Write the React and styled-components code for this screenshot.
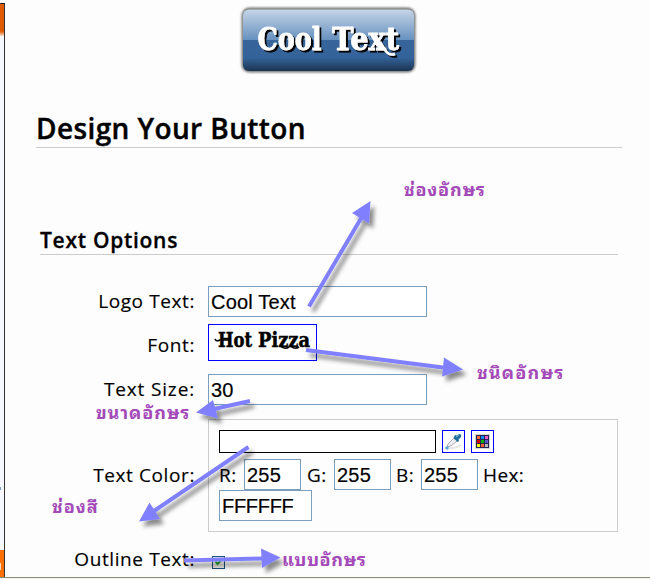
import React from 'react'
import styled, { createGlobalStyle } from 'styled-components'

const GlobalStyle = createGlobalStyle`
    * {
        box-sizing: border-box;
    }
    body {
        margin: 0;
        background: #fdfdfd;
        color: #000;
        font-family: 'Open Sans', 'Noto Sans', sans-serif;
        overflow: hidden;
    }
`;

const Page = styled.div`
    position: relative;
    display: flex;
    width: 650px;
    height: 579px;
    padding-top: 3px;
    overflow: hidden;
`;

const Rail = styled.div`
    width: 5px;
    height: 574px;
    flex: none;
    display: flex;
    flex-direction: column;
    border-top: 1px solid #222;
    border-right: 1px solid #333;
    background: #f8f8ff;
`;

const RailBlock = styled.span`
    width: ${props => props.width || 4}px;
    height: ${props => props.height}px;
    margin-top: ${props => props.top || 0}px;
    flex: none;
    background: ${props => props.color};
`;

const Main = styled.main`
    flex: 1;
    height: 574px;
    padding: 0 28px 0 31px;
`;

const LogoRow = styled.div`
    height: 74px;
    padding-left: 202px;
`;

const Title = styled.h1`
    height: 71px;
    margin: 0;
    padding-top: 32px;
    border-bottom: 1px solid #ccc;
    font-size: 28px;
    line-height: 38px;
    font-weight: 600;
    letter-spacing: 0.4px;
    -webkit-text-stroke: 0.4px #000;
    white-space: nowrap;
`;

const Section = styled.section`
    padding: 75px 4px 0;
`;

const SectionTitle = styled.h2`
    height: 32px;
    margin: 0 0 31px;
    border-bottom: 1px solid #ccc;
    font-size: 21px;
    line-height: 34px;
    font-weight: 600;
    letter-spacing: 0.72px;
    -webkit-text-stroke: 0.3px #000;
    white-space: nowrap;
`;

const Row = styled.div`
    display: flex;
    align-items: center;
    height: ${props => props.height}px;
    margin-bottom: ${props => props.gap || 0}px;
`;

const Label = styled.label`
    width: 155px;
    margin-right: 13px;
    padding-bottom: ${props => (props.low ? 0 : 2)}px;
    padding-top: ${props => (props.low ? 4 : 0)}px;
    flex: none;
    text-align: right;
    font-size: 19px;
    line-height: 28px;
    letter-spacing: ${props => props.spacing || 0.6}px;
    -webkit-text-stroke: 0.15px #000;
    white-space: nowrap;
`;

const Field = styled.input`
    width: ${props => props.width}px;
    height: 31px;
    margin: 0;
    padding: 1px 2px 0;
    border: 1px solid #7b9ebd;
    border-radius: 0;
    outline: 0;
    background: #fff;
    color: #000;
    font: 20px 'Liberation Sans', Arial, sans-serif;
    letter-spacing: ${props => props.spacing || 0.2}px;
    -webkit-text-stroke: 0.2px #000;
`;

const FontBox = styled.div`
    width: 109px;
    height: 37px;
    border: 1px solid #00f;
    background: #fff;
`;

const ColorPanel = styled.div`
    width: 410px;
    height: 113px;
    padding: 10px;
    border: 1px solid #ccc;
`;

const SwatchLine = styled.div`
    display: flex;
    gap: 6px;
    margin-bottom: 6px;
`;

const Swatch = styled.span`
    width: 217px;
    height: 23px;
    border: 1px solid #000;
    background: #fff;
`;

const IconButton = styled.span`
    width: 23px;
    height: 23px;
    border: 1px solid #00f;
    background: #fff;
    svg {
        display: block;
    }
`;

const Channels = styled.div`
    display: flex;
    align-items: center;
    height: 31px;
`;

const Channel = styled.span`
    width: ${props => props.width}px;
    padding-left: ${props => props.indent}px;
    flex: none;
    font-size: 19px;
    line-height: 28px;
    letter-spacing: 0.4px;
    -webkit-text-stroke: 0.15px #000;
    white-space: nowrap;
`;

const Check = styled.span`
    width: 13px;
    height: 13px;
    margin: 5px 0 0 4px;
    border: 1px solid #1c5180;
    background: #f4f4f0;
    svg {
        display: block;
    }
`;

const BottomLine = styled.div`
    position: absolute;
    left: 0;
    right: 0;
    bottom: 0;
    height: 2px;
    border-top: 1px solid #8c8c7a;
    background: #f4f3ea;
`;

const Arrows = styled.svg`
    position: absolute;
    left: 0;
    top: 0;
    pointer-events: none;
`;

const Note = styled.span`
    position: absolute;
    left: ${props => props.x}px;
    top: ${props => props.y}px;
    color: #a349b8;
    font: bold 18px/20px 'Noto Sans Thai Looped', 'Noto Looped Thai', 'Loma', 'Waree', 'Garuda', 'Noto Sans Thai', sans-serif;
    letter-spacing: ${props => props.spacing || 0}px;
    white-space: nowrap;
`;

const LogoButton = () => (
    <svg width="180" height="74" viewBox="238 3 180 74">
        <defs>
            <linearGradient id="face" x1="0" y1="0" x2="0" y2="1">
                <stop offset="0" stopColor="#c5d5e7" />
                <stop offset="0.5" stopColor="#6690bf" />
                <stop offset="0.5" stopColor="#376599" />
                <stop offset="0.78" stopColor="#34639b" />
                <stop offset="1" stopColor="#1b3350" />
            </linearGradient>
            <filter id="glow" x="-10%" y="-20%" width="120%" height="140%">
                <feGaussianBlur stdDeviation="1.3" />
            </filter>
            <filter id="drop" filterUnits="userSpaceOnUse" x="238" y="3" width="180" height="74">
                <feDropShadow dx="2" dy="2" stdDeviation="0.3" floodColor="#000" floodOpacity="1" />
            </filter>
        </defs>
        <rect x="241.5" y="7.5" width="174" height="65" rx="8" fill="#777" filter="url(#glow)" />
        <rect x="243" y="9.5" width="171" height="61.5" rx="6" fill="url(#face)" />
        <g
            fontFamily="'DejaVu Serif', serif"
            fontWeight="bold"
            fontSize="32"
            fill="#fff"
            stroke="#fff"
            strokeWidth="0.8"
            filter="url(#drop)"
        >
            <text x="257.5" y="50" textLength="64" lengthAdjust="spacingAndGlyphs">Cool</text>
            <text x="332" y="50" textLength="67" lengthAdjust="spacingAndGlyphs">Text</text>
            <path d="M380 42L385 50Q389 56 395 54" fill="none" strokeWidth="2.4" />
        </g>
    </svg>
)

const HotPizza = () => (
    <svg width="107" height="35" viewBox="209 325 107 35">
        <g fontFamily="'DejaVu Serif', serif" fontWeight="bold" fontSize="20" stroke="#000" strokeWidth="0.5">
            <text x="218" y="347" textLength="34" lengthAdjust="spacingAndGlyphs">Hot</text>
            <text x="258" y="347" textLength="52" lengthAdjust="spacingAndGlyphs">Pizza</text>
        </g>
        <path d="M215 339Q216 342 220 340H230M280 346Q285 350 289 347M290 346Q295 350 299 347" fill="none" stroke="#000" strokeWidth="1.6" />
    </svg>
)

const Picker = () => (
    <svg width="21" height="21" viewBox="0 0 21 21">
        <path d="M6 17Q12 18 18 14" stroke="#e4e4e4" strokeWidth="2" fill="none" />
        <path d="M4 16L5 13L11 7L14 10L8 15Z" fill="#eceeef" stroke="#99a" strokeWidth="0.8" />
        <path d="M11 6L12 4L14 4.5L16 3Q19 3 18 6L15.5 8.5L16 10L14.5 11L10.5 7Z" fill="#216f9b" />
        <path d="M13 6L16 4" stroke="#70bede" />
        <circle cx="4" cy="17" r="1.7" fill="#56a8d0" />
    </svg>
)

const tiles = ['#f63', '#0a8cf5', '#f55ac6', '#d60000', '#00b800', '#5a5ac8', '#ff0', '#ff6030', '#bbb']

const Palette = () => (
    <svg width="21" height="21" viewBox="0 0 21 21">
        <rect x="3" y="3" width="15" height="15" fill="#d5d5dc" />
        <rect x="4" y="4" width="13" height="13" fill="#242454" />
        {tiles.map((color, i) => (
            <rect key={i} x={5 + (i % 3) * 4} y={5 + Math.floor(i / 3) * 4} width="3" height="3" fill={color} />
        ))}
    </svg>
)

const arrows = [
    { line: 'M309 306.5L363 215', head: '370.5,201 352,213 369,223.5' },
    { line: 'M306 350L443 367.5', head: '463,369.5 444,357.5 442,376.5' },
    { line: 'M250 401L214 409', head: '196,412.5 213,400 218,418.5' },
    { line: 'M248.5 447L154 511', head: '139,521.5 149.5,502.5 160,519' },
    { line: 'M184 560.5L262 558.5', head: '280.5,557.5 261,548.5 262,568' },
]

const ArrowLayer = () => (
    <Arrows width="650" height="579">
        <defs>
            <filter id="soft" filterUnits="userSpaceOnUse" x="0" y="0" width="650" height="579">
                <feDropShadow dx="4" dy="5" stdDeviation="2" floodColor="#000" floodOpacity="0.45" />
            </filter>
        </defs>
        <g filter="url(#soft)">
            {arrows.map(arrow => (
                <g key={arrow.line}>
                    <path d={arrow.line} fill="none" stroke="#8080ff" strokeWidth="4" />
                    <polygon points={arrow.head} fill="#8080ff" />
                </g>
            ))}
        </g>
    </Arrows>
)

const App = () => {
    return (
        <Page>
            <GlobalStyle />
            <Rail>
                <RailBlock height={32} color="linear-gradient(#e05a00 85%, #f8e0d0)" />
                <RailBlock width={1} height={3} top={451} color="#7d9cc8" />
                <RailBlock height={27} top={60} color="linear-gradient(90deg, #ffd9bd 1px, #ff7000 1px) 0 13px / 4px 7px no-repeat, #ff7000" />
            </Rail>
            <Main>
                <LogoRow><LogoButton /></LogoRow>
                <Title>Design Your Button</Title>
                <Section>
                    <SectionTitle>Text Options</SectionTitle>
                    <Row height={31} gap={7}>
                        <Label>Logo Text:</Label>
                        <Field width={219} defaultValue="Cool Text" />
                    </Row>
                    <Row height={37} gap={13}>
                        <Label low>Font:</Label>
                        <FontBox><HotPizza /></FontBox>
                    </Row>
                    <Row height={31} gap={14}>
                        <Label spacing={0.85}>Text Size:</Label>
                        <Field width={219} defaultValue="30" />
                    </Row>
                    <Row height={113} gap={13}>
                        <Label>Text Color:</Label>
                        <ColorPanel>
                            <SwatchLine>
                                <Swatch />
                                <IconButton><Picker /></IconButton>
                                <IconButton><Palette /></IconButton>
                            </SwatchLine>
                            <Channels>
                                <Channel width={25} indent={0}>R:</Channel>
                                <Field width={57} defaultValue="255" />
                                <Channel width={33} indent={6}>G:</Channel>
                                <Field width={57} defaultValue="255" />
                                <Channel width={30} indent={5}>B:</Channel>
                                <Field width={57} defaultValue="255" />
                                <Channel width={50} indent={5}>Hex:</Channel>
                            </Channels>
                            <Field width={93} spacing={-0.3} defaultValue="FFFFFF" />
                        </ColorPanel>
                    </Row>
                    <Row height={30}>
                        <Label>Outline Text:</Label>
                        <Check>
                            <svg width="11" height="11" viewBox="0 0 11 11">
                                <path d="M2.5 4.5L4.5 7L8.5 3" fill="none" stroke="#21a121" strokeWidth="2" />
                            </svg>
                        </Check>
                    </Row>
                </Section>
            </Main>
            <BottomLine />
            <ArrowLayer />
            <Note x={404} y={178} spacing={0.8}>ช่องอักษร</Note>
            <Note x={477} y={361} spacing={1.2}>ชนิดอักษร</Note>
            <Note x={96} y={401} spacing={0.9}>ขนาดอักษร</Note>
            <Note x={52} y={495} spacing={1}>ช่องสี</Note>
            <Note x={282} y={548} spacing={0.6}>แบบอักษร</Note>
        </Page>
    )
}

export default App
